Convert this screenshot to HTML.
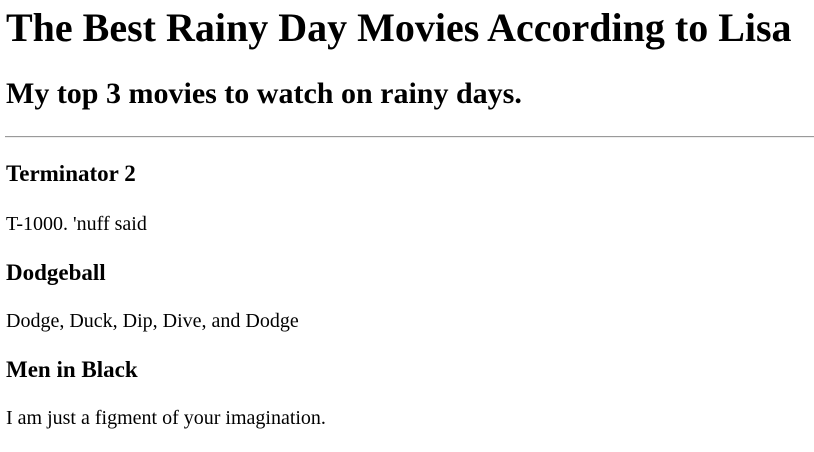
<!DOCTYPE html>
<html><head><meta charset="utf-8"><style>
body{margin:0;background:#fff;color:#000;font-family:"Liberation Serif",serif;width:814px;height:452px;position:relative;overflow:hidden}
div{position:absolute;left:6px;line-height:1;white-space:nowrap}
.h1{font-size:40px;font-weight:bold;top:8px}
.h2{font-size:30px;font-weight:bold;top:79px}
.h3{font-size:23px;font-weight:bold}
.p{font-size:20px}
hr{position:absolute;left:5px;top:136px;width:809px;margin:0;border:0;border-top:1px solid #9a9a9a;border-bottom:1px solid #eee;height:0}
</style></head><body>
<div class="h1">The Best Rainy Day Movies According to Lisa</div>
<div class="h2">My top 3 movies to watch on rainy days.</div>
<hr>
<div class="h3" style="top:162px">Terminator 2</div>
<div class="p" style="top:214px">T-1000. 'nuff said</div>
<div class="h3" style="top:261px">Dodgeball</div>
<div class="p" style="top:311px">Dodge, Duck, Dip, Dive, and Dodge</div>
<div class="h3" style="top:358px">Men in Black</div>
<div class="p" style="top:408px">I am just a figment of your imagination.</div>
</body></html>
